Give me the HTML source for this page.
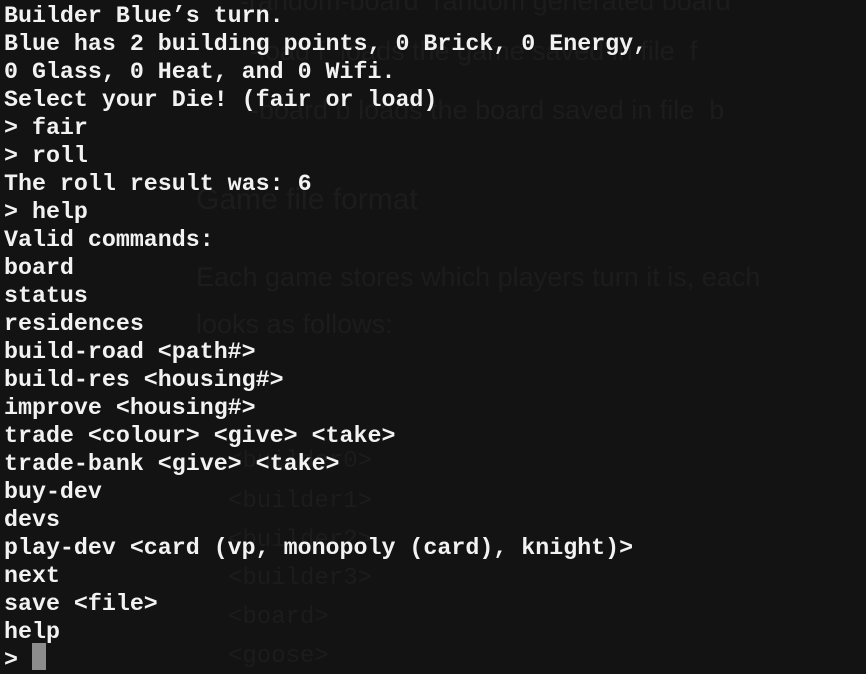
<!DOCTYPE html>
<html><head><meta charset="utf-8"><style>
html,body{margin:0;padding:0;}
body{width:866px;height:674px;background:#131313;position:relative;overflow:hidden;}
.g{position:absolute;color:#1c1c1c;font-family:"Liberation Sans",sans-serif;white-space:pre;}
.gm{position:absolute;color:#1c1c1c;font-family:"Liberation Mono",monospace;font-size:24px;white-space:pre;}
#t{position:absolute;left:4px;top:2px;margin:0;font-family:"Liberation Mono",monospace;font-size:23.3px;line-height:28px;color:#f2f2f2;white-space:pre;font-weight:bold;letter-spacing:0;}
#c{position:absolute;left:32px;top:643px;width:14px;height:27px;background:#8c8c8c;}
</style></head><body>
<div class="g" style="left:240px;top:-14px;font-size:27px;">-random-board  random generated board</div>
<div class="g" style="left:250px;top:36px;font-size:27px;">-load f  loads the game saved in file  f</div>
<div class="g" style="left:250px;top:95px;font-size:27px;">-board b loads the board saved in file  b</div>
<div class="g" style="left:196px;top:183px;font-size:30px;">Game file format</div>
<div class="g" style="left:196px;top:262px;font-size:27px;">Each game stores which players turn it is, each</div>
<div class="g" style="left:196px;top:309px;font-size:27px;">looks as follows:</div>
<div class="gm" style="left:228px;top:448px;">&lt;builder0&gt;</div>
<div class="gm" style="left:228px;top:488px;">&lt;builder1&gt;</div>
<div class="gm" style="left:228px;top:527px;">&lt;builder2&gt;</div>
<div class="gm" style="left:228px;top:565px;">&lt;builder3&gt;</div>
<div class="gm" style="left:228px;top:604px;">&lt;board&gt;</div>
<div class="gm" style="left:228px;top:643px;">&lt;goose&gt;</div>
<pre id="t">Builder Blue’s turn.
Blue has 2 building points, 0 Brick, 0 Energy,
0 Glass, 0 Heat, and 0 Wifi.
Select your Die! (fair or load)
&gt; fair
&gt; roll
The roll result was: 6
&gt; help
Valid commands:
board
status
residences
build-road &lt;path#&gt;
build-res &lt;housing#&gt;
improve &lt;housing#&gt;
trade &lt;colour&gt; &lt;give&gt; &lt;take&gt;
trade-bank &lt;give&gt; &lt;take&gt;
buy-dev
devs
play-dev &lt;card (vp, monopoly (card), knight)&gt;
next
save &lt;file&gt;
help
&gt; </pre>
<div id="c"></div>
</body></html>
